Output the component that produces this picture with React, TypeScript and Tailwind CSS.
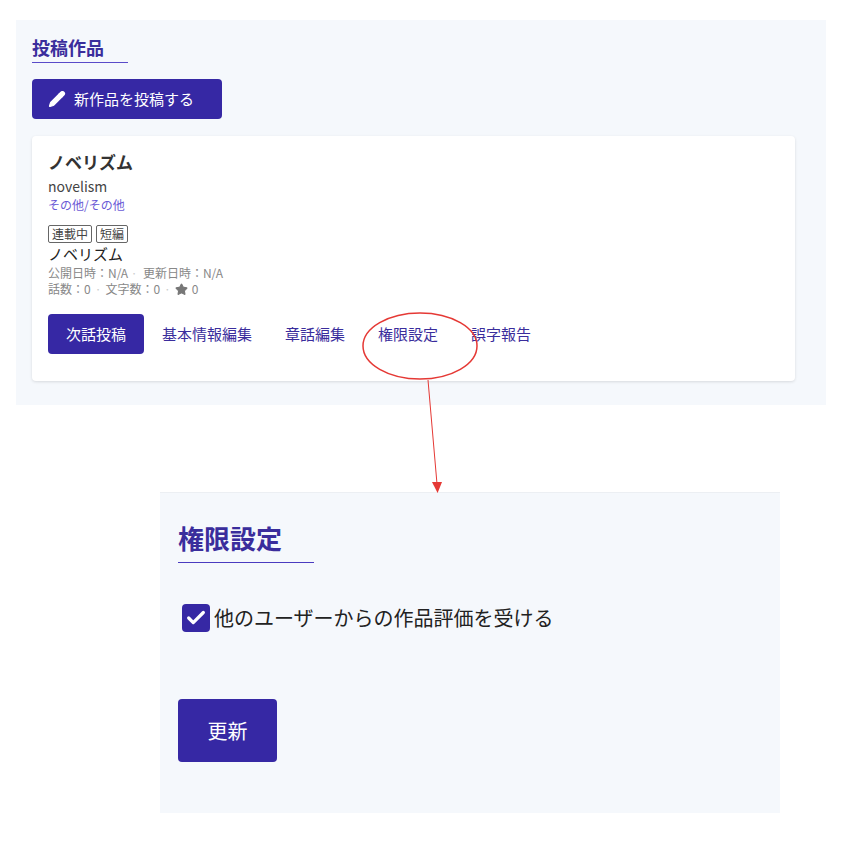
import { Pencil, Star, Check } from 'lucide-react';

const font = { fontFamily: '"Noto Sans CJK JP", "Noto Sans", sans-serif' };

export default function App() {
  return (
    <div className="relative w-[866px] h-[850px] bg-white" style={font}>
      <div className="pt-5 px-4">
        <div className="w-[810px] h-[385px] bg-[#f5f8fc] px-4 pt-4">
          <h2 className="inline-block text-[18px] font-bold text-[#3a2d9c] leading-[22px] pb-[4px] pr-6 border-b border-[#5a4bc9]">
            投稿作品
          </h2>
          <div className="mt-[16px]">
            <button className="h-[40px] w-[190px] flex items-center gap-2 px-4 rounded bg-[#3628a4] text-white text-[15px]">
              <Pencil size={18} fill="white" strokeWidth={1.5} />
              新作品を投稿する
            </button>
          </div>
          <div className="mt-[17px] w-[763px] h-[245px] bg-white rounded shadow-[0_1px_3px_rgba(0,0,0,0.12)] px-4 pt-[14px]">
            <div className="text-[17px] font-bold text-[#333] leading-[24px]">ノベリズム</div>
            <div className="text-[14px] text-[#444] leading-[20px] mt-[2px]">novelism</div>
            <div className="text-[12px] text-[#6b5bd6] leading-[18px]">その他/その他</div>
            <div className="flex gap-1 mt-[11px]">
              <span className="text-[12px] leading-[16px] border border-[#666] rounded-[2px] px-[3px] text-[#444]">連載中</span>
              <span className="text-[12px] leading-[16px] border border-[#666] rounded-[2px] px-[3px] text-[#444]">短編</span>
            </div>
            <div className="text-[15px] text-[#222] leading-[22px]">ノベリズム</div>
            <div className="text-[12px] text-[#888] leading-[16px]">公開日時：N/A <span className="text-[#ccc]">·</span>&nbsp; 更新日時：N/A</div>
            <div className="text-[12px] text-[#888] leading-[16px] flex items-center gap-1">
              話数：0 <span className="text-[#ccc]">·</span> 文字数：0 <span className="text-[#ccc]">·</span>
              <Star size={13} fill="#777" stroke="#777" /> 0
            </div>
            <div className="flex items-center mt-[17px] text-[15px]">
              <button className="h-[40px] w-[96px] rounded bg-[#3628a4] text-white">次話投稿</button>
              <span className="text-[#3a2d9c] ml-[18px]">基本情報編集</span>
              <span className="text-[#3a2d9c] ml-[33px]">章話編集</span>
              <span className="text-[#3a2d9c] ml-[33px]">権限設定</span>
              <span className="text-[#3a2d9c] ml-[33px]">誤字報告</span>
            </div>
          </div>
        </div>
      </div>

      <div className="mt-[87px] ml-[160px] w-[620px] h-[321px] bg-[#f5f8fc] border-t border-[#eceff3] px-[18px] pt-[28px]">
        <h2 className="inline-block text-[26px] font-bold text-[#3a2d9c] leading-[34px] pb-[7px] pr-8 border-b border-[#4a3bc0]">
          権限設定
        </h2>
        <label className="flex items-center mt-[40px] ml-[4px] gap-[4px]">
          <span className="w-[28px] h-[28px] rounded bg-[#3628a4] flex items-center justify-center">
            <Check size={22} color="white" strokeWidth={3.5} />
          </span>
          <span className="text-[20px] text-[#222]">他のユーザーからの作品評価を受ける</span>
        </label>
        <button className="mt-[66px] w-[99px] h-[63px] rounded bg-[#3628a4] text-white text-[20px]">更新</button>
      </div>

      <svg className="absolute inset-0 pointer-events-none" width="866" height="850">
        <ellipse cx="420" cy="346" rx="57" ry="33" fill="none" stroke="#e53935" strokeWidth="1.5" />
        <line x1="428" y1="380" x2="437" y2="484" stroke="#e53935" strokeWidth="1" />
        <polygon points="432,482 442,482 437.6,493" fill="#e53935" />
      </svg>
    </div>
  );
}
